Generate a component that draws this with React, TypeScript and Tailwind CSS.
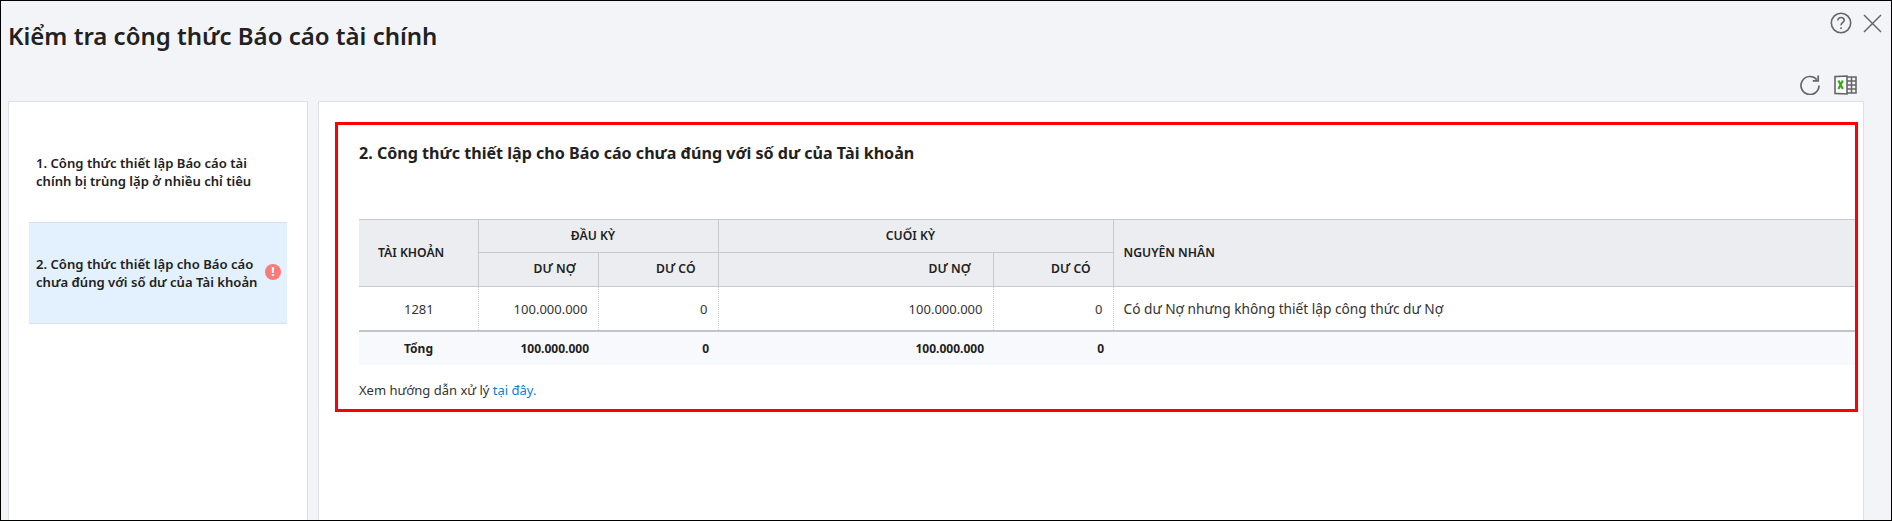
import React from 'react'

const FONT = "font-['Noto_Sans',sans-serif]"

function HelpIcon() {
  return (
    <svg width="22" height="22" viewBox="0 0 22 22" fill="none" stroke="#666" strokeWidth="1.6">
      <circle cx="11" cy="11" r="9.7" />
      <path d="M7.8 8.6c0-1.9 1.4-3.1 3.2-3.1s3.2 1.1 3.2 2.8c0 2.4-3.2 2.5-3.2 5" />
      <path d="M11 15.2v1.8" />
    </svg>
  )
}

function CloseIcon() {
  return (
    <svg width="19" height="19" viewBox="0 0 19 19" fill="none" stroke="#666" strokeWidth="1.5">
      <path d="M1 1l17 17M18 1L1 18" />
    </svg>
  )
}

function RefreshIcon() {
  return (
    <svg width="20" height="20" viewBox="0 0 20 20" fill="none" stroke="#666" strokeWidth="1.7">
      <path d="M16.8 4.6A9 9 0 1 0 19 10.5" />
      <path d="M18.2 0.4v5.4h-5.4" />
    </svg>
  )
}

function ExcelIcon() {
  return (
    <svg width="23" height="20" viewBox="0 0 23 20" fill="none">
      <path d="M1 1.6L13 1v18L1 18.4z" stroke="#666" strokeWidth="1.6" fill="#fff" />
      <path d="M13 2h9v16h-9" stroke="#666" strokeWidth="1.6" />
      <path d="M17.5 2v16M13 6h9M13 10h9M13 14h9" stroke="#666" strokeWidth="1.5" />
      <path d="M4.4 5.6l4.4 8.4M8.8 5.6l-4.4 8.4" stroke="#2fae14" strokeWidth="2.2" />
    </svg>
  )
}

const th = 'border-[#c8c9cd] font-semibold text-[12.2px] text-[#212121]'
const td = 'border-r border-dotted border-r-[#cfd0d3] pt-[2px] text-[13px] text-[#333] pr-2.5'
const tf = 'pt-[2px] font-bold text-[12px] text-[#212121]'

function BalanceTable() {
  return (
    <table className="w-full table-fixed border-collapse">
      <colgroup>
        <col className="w-[119px]" />
        <col className="w-[120px]" />
        <col className="w-[120px]" />
        <col className="w-[275px]" />
        <col className="w-[120px]" />
        <col />
      </colgroup>
      <thead className="bg-[#ecedf0]">
        <tr className="h-[33px] border-t border-[#c8c9cd]">
          <th rowSpan={2} className={`${th} border-r pl-[19px] text-left`}>TÀI KHOẢN</th>
          <th colSpan={2} className={`${th} border-r border-b pr-[10px] text-center`}>ĐẦU KỲ</th>
          <th colSpan={2} className={`${th} border-r border-b pr-[10px] text-center`}>CUỐI KỲ</th>
          <th rowSpan={2} className={`${th} pl-2.5 text-left`}>NGUYÊN NHÂN</th>
        </tr>
        <tr className="h-[34px] border-b border-[#c8c9cd]">
          <th className={`${th} border-r pr-[22px] text-right`}>DƯ NỢ</th>
          <th className={`${th} border-r pr-[22px] text-right`}>DƯ CÓ</th>
          <th className={`${th} border-r pr-[22px] text-right`}>DƯ NỢ</th>
          <th className={`${th} border-r pr-[22px] text-right`}>DƯ CÓ</th>
        </tr>
      </thead>
      <tbody>
        <tr className="h-[44px] border-b-2 border-[#c3c4c8]">
          <td className={`${td} pr-0 pl-[45px] text-left text-[13.5px]`}>1281</td>
          <td className={`${td} text-right`}>100.000.000</td>
          <td className={`${td} text-right`}>0</td>
          <td className={`${td} text-right`}>100.000.000</td>
          <td className={`${td} text-right`}>0</td>
          <td className="pt-[2px] pl-2.5 text-[13.7px] text-[#333]">Có dư Nợ nhưng không thiết lập công thức dư Nợ</td>
        </tr>
      </tbody>
      <tfoot className="bg-[#f8f9fc]">
        <tr className="h-[34px]">
          <td className={`${tf} pl-[45px]`}>Tổng</td>
          <td className={`${tf} pr-[9px] text-right`}>100.000.000</td>
          <td className={`${tf} pr-[9px] text-right`}>0</td>
          <td className={`${tf} pr-[9px] text-right`}>100.000.000</td>
          <td className={`${tf} pr-[9px] text-right`}>0</td>
          <td />
        </tr>
      </tfoot>
    </table>
  )
}

export default function App() {
  return (
    <div className={`${FONT} flex h-[521px] flex-col border border-black bg-[#f3f4f8]`}>
      <header className="flex h-[100px] shrink-0 flex-col">
        <div className="flex h-[62px] items-start justify-between">
          <h1 className="pt-[18px] pl-[7px] text-[24px] leading-[33px] font-semibold text-[#212121]">Kiểm tra công thức Báo cáo tài chính</h1>
          <div className="flex items-center gap-[11px] pt-[11px] pr-[9px]">
            <HelpIcon />
            <CloseIcon />
          </div>
        </div>
        <div className="flex items-center justify-end gap-[14px] pt-[12px] pr-[34px]">
          <RefreshIcon />
          <ExcelIcon />
        </div>
      </header>

      <div className="flex min-h-0 flex-1 gap-[10px] pl-[7px] pr-[27px]">
        <aside className="w-[300px] shrink-0 border border-b-0 border-[#dfe0e3] bg-white px-[20px] pt-[20px]">
          <div className="flex h-[100px] items-center pl-[7px] text-[13.1px] leading-[18px] font-semibold text-[#212121]">
            <p>1. Công thức thiết lập Báo cáo tài<br />chính bị trùng lặp ở nhiều chỉ tiêu</p>
          </div>
          <div className="relative flex h-[102px] items-center border-y border-[#d5e2ee] bg-[#e3f0fd] pl-[7px] text-[13.1px] leading-[18px] font-semibold text-[#212121]">
            <p>2. Công thức thiết lập cho Báo cáo<br />chưa đúng với số dư của Tài khoản</p>
            <span className="absolute top-[41px] right-[6px] flex h-4 w-4 items-center justify-center rounded-full bg-[#f77b7b] text-[12px] leading-none font-bold text-white">!</span>
          </div>
        </aside>

        <main className="flex-1 border border-b-0 border-[#dfe0e3] bg-white pt-[20px] pl-[16px] pr-[5px]">
          <section className="h-[290px] border-[3px] border-[#ff0000] pl-[21px]">
            <h2 className="pt-[16px] pb-[54px] text-[16.1px] leading-[24px] font-bold text-[#212121]">2. Công thức thiết lập cho Báo cáo chưa đúng với số dư của Tài khoản</h2>
            <BalanceTable />
            <p className="pt-[16px] text-[13px] leading-[18px] text-[#333]">
              Xem hướng dẫn xử lý <a href="#" className="text-[#0b7fd4]">tại đây.</a>
            </p>
          </section>
        </main>
      </div>
    </div>
  )
}
